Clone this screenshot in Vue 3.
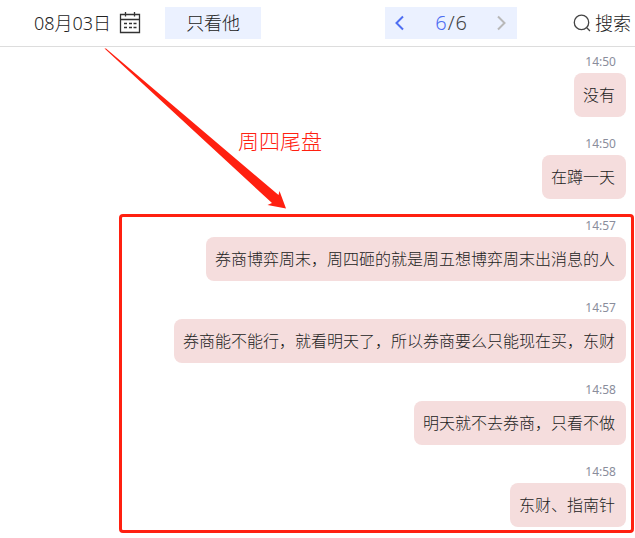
<script setup>
const earlier = [
  { time: '14:50', text: '没有' },
  { time: '14:50', text: '在蹲一天' },
]
const marked = [
  { time: '14:57', text: '券商博弈周末，周四砸的就是周五想博弈周末出消息的人' },
  { time: '14:57', text: '券商能不能行，就看明天了，所以券商要么只能现在买，东财' },
  { time: '14:58', text: '明天就不去券商，只看不做' },
  { time: '14:58', text: '东财、指南针' },
]
</script>

<template>
  <div class="page">
    <header class="toolbar">
      <button class="plain date" type="button">
        <span>08月03日</span>
        <svg class="calendar" viewBox="0 0 22 22" width="22" height="22" aria-hidden="true">
          <path d="M1.500 2.500h19v18h-19zM1 7.500h20M6.500 0v4.500M15.500 0v4.500" fill="none" stroke="#333" stroke-width="1.300" />
          <path d="M5 11.500h3M10 11.500h3M14.500 11.500h3M5 15.500h3M10 15.500h3M14.500 15.500h3" fill="none" stroke="#333" stroke-width="1.500" />
        </svg>
      </button>
      <button class="only" type="button">只看他</button>
      <nav class="pager" aria-label="分页">
        <button class="plain arrow" type="button" aria-label="上一页">
          <svg viewBox="0 0 10 16" width="10" height="16"><path d="M8 1.500L1.500 8L8 14.500" fill="none" stroke="#4e6ef2" stroke-width="2" /></svg>
        </button>
        <span class="count"><span class="current">6</span><span>/</span><span>6</span></span>
        <button class="plain arrow" type="button" aria-label="下一页">
          <svg viewBox="0 0 10 16" width="10" height="16"><path d="M1 1.500L7.500 8L1 14.500" fill="none" stroke="#b8b8b8" stroke-width="2" /></svg>
        </button>
      </nav>
      <button class="plain search" type="button">
        <svg viewBox="0 0 18 18" width="18" height="18" aria-hidden="true">
          <path d="M8.500 1.200a7.200 7.200 0 1 0 0 14.400a7.200 7.200 0 1 0 0-14.400M13.500 13.500L17 17" fill="none" stroke="#444" stroke-width="1.300" />
        </svg>
        <span>搜索</span>
      </button>
    </header>

    <main class="chat">
      <section class="group">
        <article v-for="(m, i) in earlier" :key="i" class="message">
          <time class="time">{{ m.time }}</time>
          <p class="bubble">{{ m.text }}</p>
        </article>
      </section>
      <section class="group marked">
        <article v-for="(m, i) in marked" :key="i" class="message">
          <time class="time">{{ m.time }}</time>
          <p class="bubble">{{ m.text }}</p>
        </article>
      </section>
      <svg class="pointer" viewBox="0 0 184 162" width="184" height="162" aria-hidden="true">
        <path d="M0.500 0.500L2 0.500L174.500 147L175.500 143L182 160.500L163.500 157L168 155Z" fill="#ff2010" />
      </svg>
      <span class="note">周四尾盘</span>
    </main>
  </div>
</template>

<style>
body {
  margin: 0;
  background: #fff;
}
</style>

<style scoped>
.page {
  font-family: "Noto Sans", "Noto Sans CJK SC", sans-serif;
  font-weight: 300;
  color: #222;
}
.toolbar {
  display: flex;
  align-items: center;
  height: 46px;
  padding: 0 4px 0 34px;
  border-bottom: 1px solid #ddd;
  font-size: 18px;
  line-height: 32px;
}
button {
  font: inherit;
  color: inherit;
  border: 0;
  padding: 0;
  cursor: pointer;
}
.plain {
  background: none;
}
.date,
.search {
  display: flex;
  align-items: center;
  white-space: nowrap;
}
.date {
  gap: 8px;
}
.search {
  gap: 4px;
  margin-left: auto;
}
.only {
  width: 96px;
  height: 32px;
  margin-left: 24px;
  background: #ebf1ff;
}
.pager {
  display: flex;
  align-items: center;
  justify-content: space-between;
  box-sizing: border-box;
  width: 132px;
  height: 32px;
  margin-left: 124px;
  padding: 0 10px;
  background: #ebf1ff;
}
.arrow {
  display: flex;
}
.count {
  display: flex;
  gap: 1px;
  font-size: 20px;
  color: #444;
}
.current {
  color: #4e6ef2;
}
.chat {
  position: relative;
  padding: 4px 0 11px;
}
.group {
  display: flex;
  flex-direction: column;
  gap: 16px;
  padding-right: 9px;
  margin-bottom: 16px;
}
.marked {
  position: relative;
  margin-bottom: 0;
}
.marked::after {
  content: "";
  position: absolute;
  inset: -1px 1px -6px 119px;
  border: 3px solid #ff2010;
  border-radius: 4px;
  pointer-events: none;
}
.message {
  display: flex;
  flex-direction: column;
  align-items: flex-end;
}
.time {
  padding-right: 10px;
  font-size: 12px;
  font-weight: 400;
  line-height: 22px;
  color: #8a8d9c;
}
.bubble {
  margin: 0;
  padding: 10px 11px 10px 9px;
  border-radius: 8px;
  background: #f5dddd;
  font-size: 16px;
  line-height: 24px;
}
.pointer {
  position: absolute;
  left: 104px;
  top: 1px;
  pointer-events: none;
}
.note {
  position: absolute;
  left: 238px;
  top: 78px;
  font-size: 21px;
  line-height: 32px;
  color: #ff2010;
}
</style>
